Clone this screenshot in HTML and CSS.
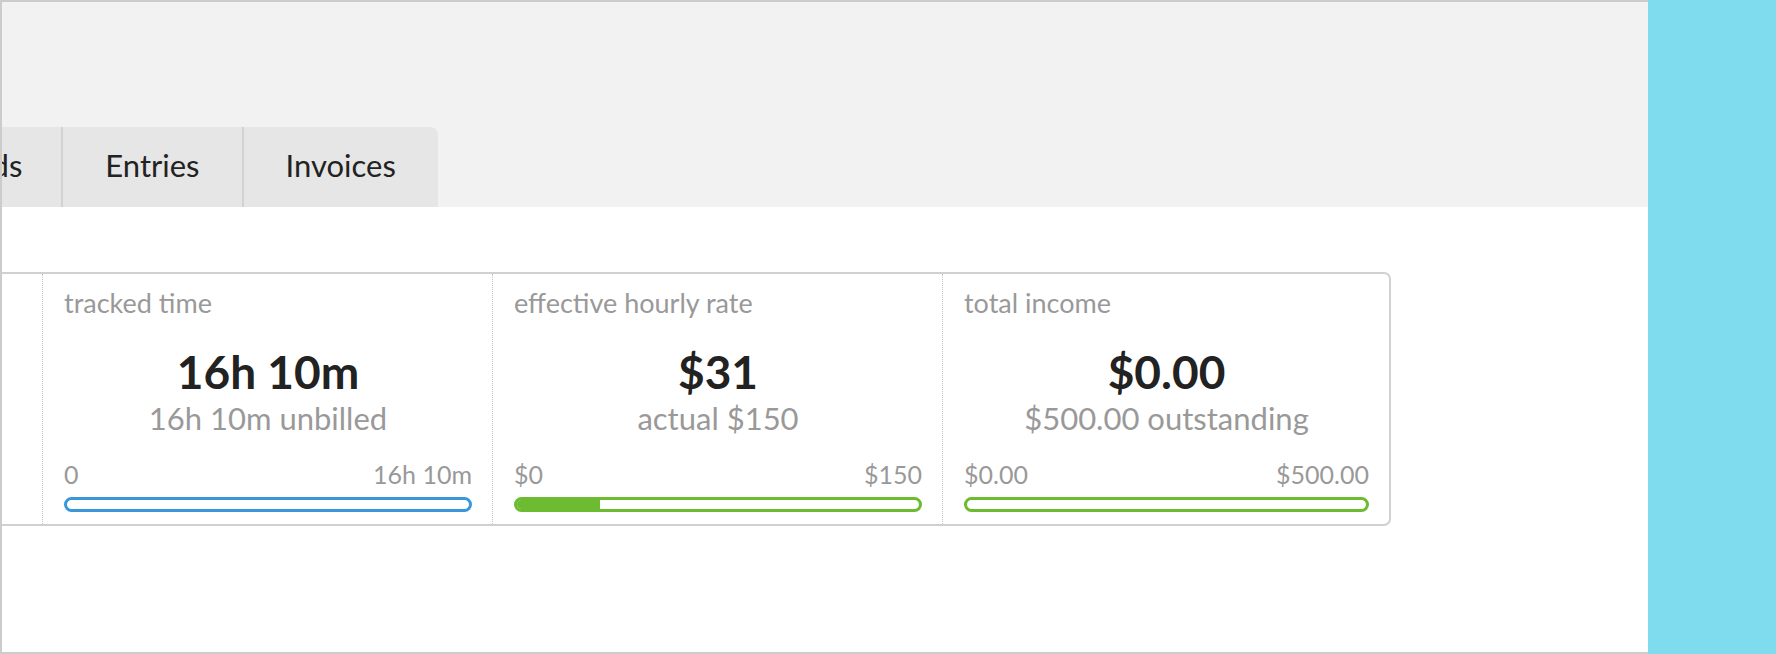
FILE: index.html
```html
<!DOCTYPE html>
<html lang="en">
<head>
<meta charset="utf-8">
<title>Project overview</title>
<link rel="stylesheet" href="styles.css">
</head>
<body>
<div class="page">
  <main class="frame">
    <header class="header">
      <nav class="tabs">
        <a class="tab tab-first">Records</a>
        <a class="tab">Entries</a>
        <a class="tab tab-last">Invoices</a>
      </nav>
    </header>
    <section class="content">
      <div class="card">
        <div class="panel panel-hidden"></div>
        <div class="panel">
          <div class="label">tracked time</div>
          <div class="value">16h 10m</div>
          <div class="sub">16h 10m unbilled</div>
          <div class="range"><span>0</span><span>16h 10m</span></div>
          <div class="bar bar-blue"></div>
        </div>
        <div class="panel">
          <div class="label">effective hourly rate</div>
          <div class="value">$31</div>
          <div class="sub">actual $150</div>
          <div class="range"><span>$0</span><span>$150</span></div>
          <div class="bar bar-green"><div class="fill" style="width:20.67%"></div></div>
        </div>
        <div class="panel panel-last">
          <div class="label">total income</div>
          <div class="value">$0.00</div>
          <div class="sub">$500.00 outstanding</div>
          <div class="range"><span>$0.00</span><span>$500.00</span></div>
          <div class="bar bar-green"></div>
        </div>
      </div>
    </section>
  </main>
  <aside class="side"></aside>
</div>
</body>
</html>
```

FILE: styles.css
```css
* { box-sizing: border-box; }
html, body { margin: 0; padding: 0; }
body {
  width: 1776px;
  height: 654px;
  overflow: hidden;
  font-family: Lato, "Open Sans", "Liberation Sans", sans-serif;
  background: #ffffff;
}
.page {
  display: flex;
  width: 1776px;
  height: 654px;
}
.frame {
  width: 1648px;
  height: 654px;
  flex: none;
  border: 2px solid #cccccc;
  border-right: none;
  background: #ffffff;
  overflow: hidden;
  display: flex;
  flex-direction: column;
}
.side {
  flex: 1;
  background: #7fdbee;
}
.header {
  height: 205px;
  flex: none;
  background: #f2f2f2;
  display: flex;
  align-items: flex-end;
}
.tabs {
  display: flex;
  margin-left: -130px;
}
.tab {
  display: block;
  height: 80px;
  padding: 20px 42px 24px;
  font-size: 31px;
  line-height: 36px;
  color: #222222;
  background: #e6e6e6;
  white-space: nowrap;
}
.tab + .tab { border-left: 2px solid #d2d2d2; }
.tab-first {
  padding-right: 39px;
  border-top-left-radius: 8px;
}
.tab-last { border-top-right-radius: 8px; }
.content {
  padding-top: 65px;
}
.card {
  display: grid;
  grid-template-columns: 448px 450px 450px 447px;
  margin-left: -410px;
  width: max-content;
  border: 2px solid #d0d0d0;
  border-radius: 7px;
  background: #ffffff;
}
.panel {
  padding: 13px 20px 12px 21px;
  border-left: 1px dotted #c4c4c4;
  color: #999999;
  min-height: 250px;
}
.panel-hidden { border-left: none; }
.label {
  font-size: 27px;
  line-height: 32px;
  white-space: nowrap;
}
.value {
  margin-top: 28px;
  font-size: 46px;
  line-height: 50px;
  font-weight: 700;
  color: #222222;
  text-align: center;
}
.sub {
  margin-top: 3px;
  font-size: 31px;
  line-height: 36px;
  text-align: center;
}
.range {
  margin-top: 24px;
  display: flex;
  justify-content: space-between;
  font-size: 25px;
  line-height: 28px;
}
.bar {
  margin-top: 9px;
  height: 15px;
  border: 3px solid;
  border-radius: 8px;
  overflow: hidden;
  background: #ffffff;
}
.bar-blue { border-color: #3a97d9; }
.bar-green { border-color: #6cbb30; }
.fill {
  height: 100%;
  background: #6cbb30;
}
```
